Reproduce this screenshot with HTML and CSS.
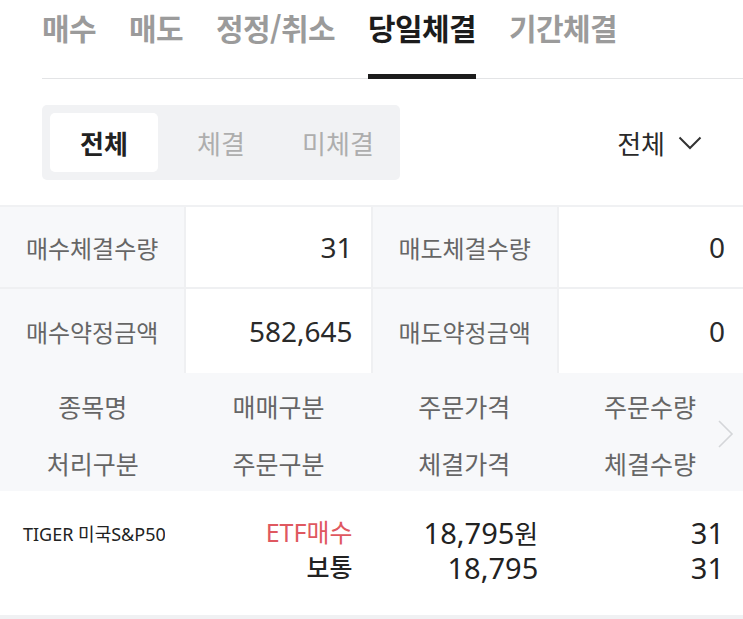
FILE: index.html
```html
<!DOCTYPE html>
<html lang="ko">
<head>
<meta charset="utf-8">
<title>당일체결</title>
<link rel="stylesheet" href="styles.css">
</head>
<body>
<nav class="tabs">
  <div class="tab">매수</div>
  <div class="tab">매도</div>
  <div class="tab">정정/취소</div>
  <div class="tab active">당일체결</div>
  <div class="tab">기간체결</div>
</nav>

<div class="filter-row">
  <div class="segment">
    <div class="seg-btn selected">전체</div>
    <div class="seg-btn">체결</div>
    <div class="seg-btn">미체결</div>
  </div>
  <div class="dropdown">
    <span>전체</span>
    <svg class="chev-down" width="24" height="14" viewBox="0 0 24 14"><path d="M1.5 1.5 L12 12 L22.5 1.5" fill="none" stroke="#333" stroke-width="2"/></svg>
  </div>
</div>

<div class="summary">
  <div class="s-label">매수체결수량</div>
  <div class="s-value">31</div>
  <div class="s-label">매도체결수량</div>
  <div class="s-value">0</div>
  <div class="s-label">매수약정금액</div>
  <div class="s-value">582,645</div>
  <div class="s-label">매도약정금액</div>
  <div class="s-value">0</div>
</div>

<div class="list-head">
  <div class="h-row">
    <div>종목명</div><div>매매구분</div><div>주문가격</div><div>주문수량</div>
  </div>
  <div class="h-row">
    <div>처리구분</div><div>주문구분</div><div>체결가격</div><div>체결수량</div>
  </div>
  <svg class="chev-right" width="18" height="28" viewBox="0 0 18 28"><path d="M2 1 L15 14 L2 27" fill="none" stroke="#d4d6d9" stroke-width="1.6"/></svg>
</div>

<div class="list-row">
  <div class="cell name">TIGER 미국S&amp;P500</div>
  <div class="cell right">
    <div class="line kr red">ETF매수</div>
    <div class="line kr">보통</div>
  </div>
  <div class="cell right">
    <div class="line num">18,795<span class="won">원</span></div>
    <div class="line num">18,795</div>
  </div>
  <div class="cell right">
    <div class="line num">31</div>
    <div class="line num">31</div>
  </div>
</div>
</body>
</html>
```
FILE: styles.css
```css
* { box-sizing: border-box; }

html, body {
  margin: 0;
  padding: 0;
  background: #ffffff;
}

body {
  width: 743px;
  height: 619px;
  overflow: hidden;
  font-family: "Noto Sans", "Noto Sans CJK KR", sans-serif;
  color: #222;
}

/* top tabs */
.tabs {
  display: flex;
  gap: 33px;
  margin-left: 42px;
  border-bottom: 1px solid #e3e4e6;
  font-family: "Noto Sans CJK KR", sans-serif;
}

.tab {
  font-size: 30px;
  font-weight: 700;
  letter-spacing: -0.6px;
  line-height: 36px;
  padding-top: 9px;
  padding-bottom: 29px;
  border-bottom: 5px solid transparent;
  margin-bottom: -1px;
  color: #9b9b9b;
}

.tab.active {
  color: #1c1c1c;
  border-bottom-color: #1c1c1c;
}

/* filter row */
.filter-row {
  display: flex;
  justify-content: space-between;
  align-items: center;
  margin-top: 26px;
  padding: 0 41px 0 42px;
}

.segment {
  display: flex;
  gap: 9px;
  padding: 8px;
  background: #f1f2f4;
  border-radius: 5px;
}

.seg-btn {
  width: 108px;
  height: 59px;
  display: flex;
  align-items: center;
  justify-content: center;
  font-family: "Noto Sans CJK KR", sans-serif;
  font-size: 26px;
  color: #aeaeae;
  border-radius: 5px;
}

.seg-btn.selected {
  background: #ffffff;
  color: #222;
  font-weight: 700;
}

.dropdown {
  display: flex;
  align-items: center;
  gap: 13px;
  font-family: "Noto Sans CJK KR", sans-serif;
  font-size: 26px;
  color: #2a2a2a;
}

.chev-down { display: block; }

/* summary table */
.summary {
  display: grid;
  grid-template-columns: repeat(4, 1fr);
  grid-template-rows: 80px 84px;
  gap: 2px;
  margin-top: 25px;
  border-top: 2px solid #f0f1f3;
  background: #eff0f2;
}

.s-label {
  display: flex;
  align-items: center;
  justify-content: center;
  background: #f7f8fa;
  font-family: "Noto Sans CJK KR", sans-serif;
  font-size: 24px;
  color: #666;
}

.s-value {
  display: flex;
  align-items: center;
  justify-content: flex-end;
  padding-right: 18px;
  background: #ffffff;
  font-size: 28px;
  color: #2a2a2a;
}

/* list header */
.list-head {
  position: relative;
  background: #f7f8fa;
  padding-top: 4px;
  height: 118px;
}

.h-row {
  display: grid;
  grid-template-columns: repeat(4, 1fr);
  height: 57px;
  align-items: center;
  text-align: center;
  font-family: "Noto Sans CJK KR", sans-serif;
  font-size: 25px;
  color: #666;
}

.chev-right {
  position: absolute;
  right: 8px;
  top: 47px;
}

/* list row */
.list-row {
  display: grid;
  grid-template-columns: repeat(4, 1fr);
  padding: 24px 0 30px;
  border-bottom: 4px solid #f0f1f3;
}

.cell {
  padding-right: 19px;
}

.cell.name {
  padding-left: 23px;
  padding-right: 0;
  margin-right: 21px;
  height: 35px;
  line-height: 38px;
  white-space: nowrap;
  overflow: hidden;
  font-size: 18px;
  color: #222;
}

.cell.right {
  text-align: right;
}

.line {
  height: 35px;
  line-height: 35px;
  white-space: nowrap;
}

.line.kr {
  font-family: "Noto Sans", "Noto Sans CJK KR", sans-serif;
  font-size: 25px;
  font-weight: 500;
  color: #222;
}

.line.kr.red {
  color: #df5860;
  font-weight: 400;
}

.line.num {
  font-size: 29px;
  color: #222;
}

.won {
  font-family: "Noto Sans CJK KR", sans-serif;
  font-size: 26px;
}
```
